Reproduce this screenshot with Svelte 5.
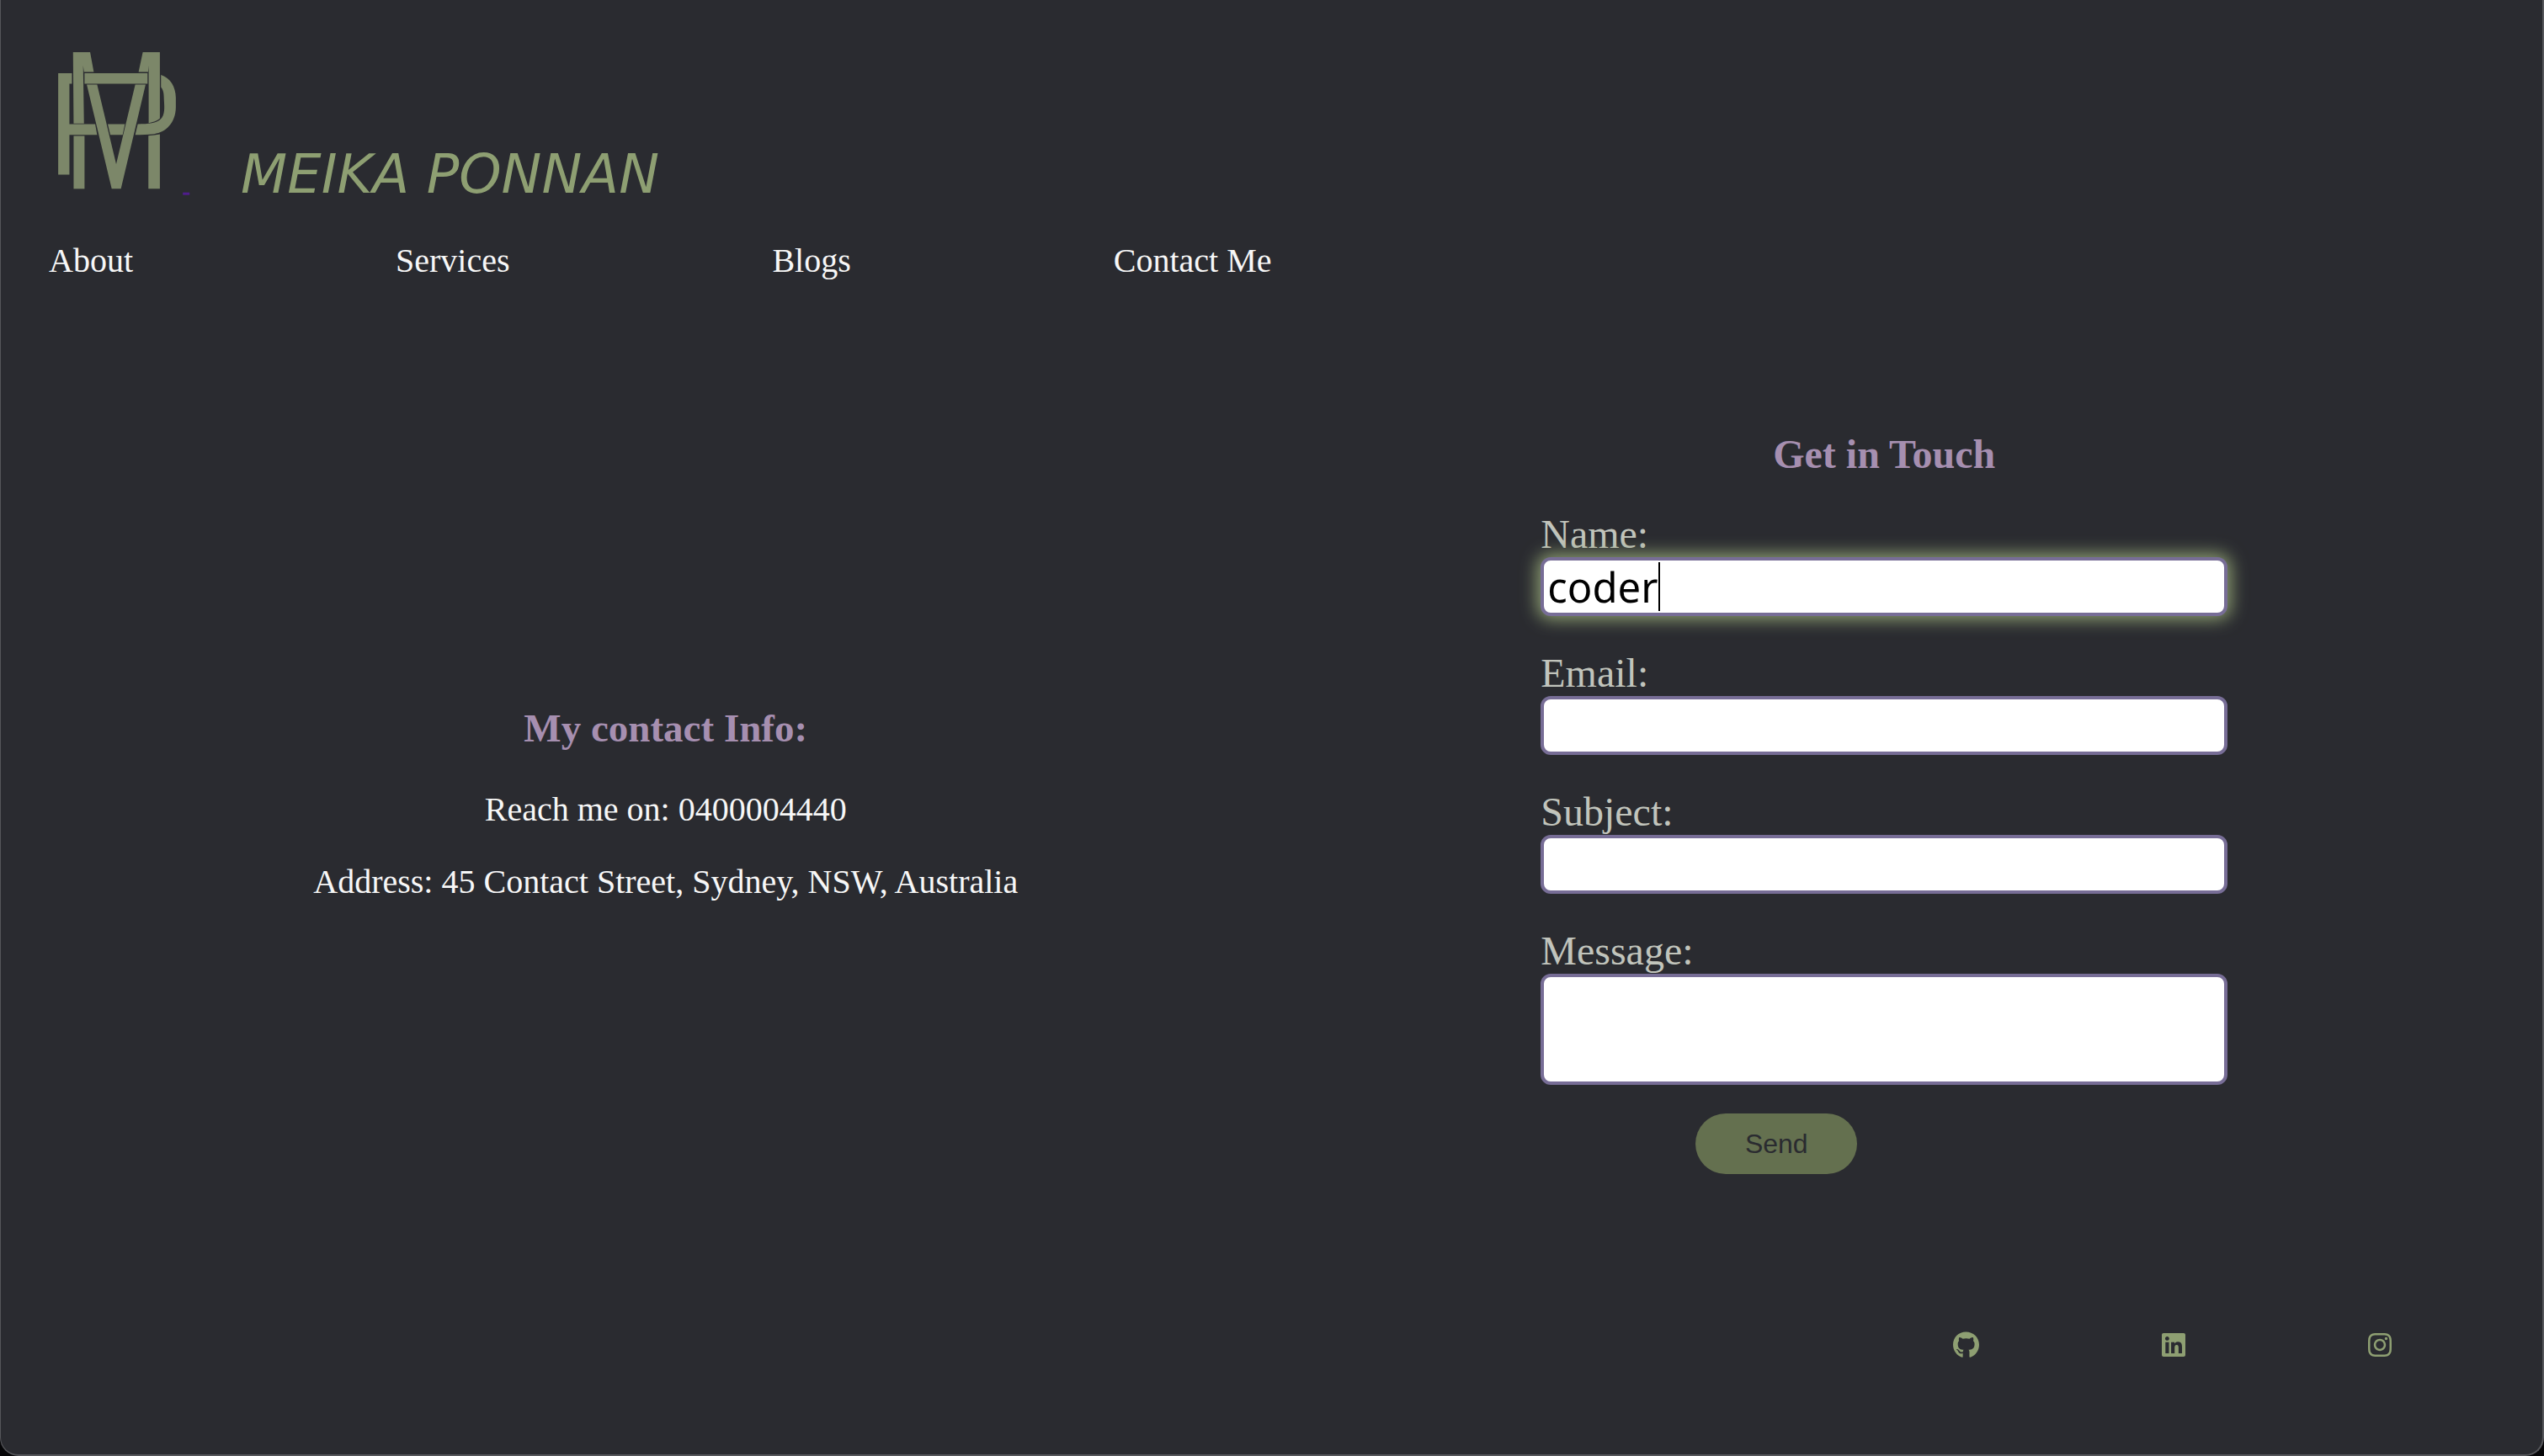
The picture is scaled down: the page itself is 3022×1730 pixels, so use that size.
<script>
  const links = ['About', 'Services', 'Blogs', 'Contact Me'];
  let name = $state('coder');
</script>

<div class="page">
  <header>
    <a class="brand" href="#home" aria-label="Meika Ponnan home">
      <svg class="logo" viewBox="0 0 480 520" aria-hidden="true">
        <g fill="#7c8769" transform="translate(-80 -60)">
          <path d="M142 66H203L216 137H181L178 114L181 321H144Z" />
          <path d="M391 66H452V303Q436 316 412 319V114L410 137H376Z" />
          <path d="M89 141H138V179H129V323H221L228 361H129V503H89Z" />
          <path d="M183 141H408V179H183Z" />
          <path d="M191 182H228L296 466L364 182H401L313 554H280Z" />
          <path d="M266 323H327L319 361H275Z" />
          <path d="M373 323C413 323 440 320 454 306C471 291 468 262 467 242C466 219 467 205 456 191V147C490 158 508 190 509 228V264C508 319 473 353 432 358C410 361 386 361 364 361Z" />
          <path d="M144 365H183V554H144Z" />
          <path d="M411 364Q433 363 452 359V554H411Z" />
        </g>
        <rect x="454" y="507" width="24" height="9" fill="#4f1d8c" />
      </svg>
      <span class="name">MEIKA PONNAN</span>
    </a>
    <nav>
      {#each links as link}
        <a href="#{link.toLowerCase().replace(' ', '-')}">{link}</a>
      {/each}
    </nav>
  </header>

  <main>
    <section class="info">
      <h3>My contact Info:</h3>
      <p>Reach me on: 0400004440</p>
      <p>Address: 45 Contact Street, Sydney, NSW, Australia</p>
    </section>

    <section class="touch">
      <h2>Get in Touch</h2>
      <form onsubmit={(e) => e.preventDefault()}>
        <label for="name">Name:</label>
        <div class="field">
          <input id="name" class="active" type="text" bind:value={name} />
          <span class="caret"></span>
        </div>
        <label for="email">Email:</label>
        <div class="field"><input id="email" type="email" /></div>
        <label for="subject">Subject:</label>
        <div class="field"><input id="subject" type="text" /></div>
        <label for="message">Message:</label>
        <textarea id="message"></textarea>
        <button type="submit">Send</button>
      </form>
    </section>
  </main>

  <footer>
    <div class="social">
      <a href="#github" aria-label="GitHub">
        <svg viewBox="0 0 496 512"><path d="M165.9 397.4c0 2-2.3 3.6-5.2 3.6-3.3.3-5.6-1.3-5.6-3.6 0-2 2.3-3.6 5.2-3.6 3-.3 5.6 1.3 5.6 3.6zm-31.1-4.5c-.7 2 1.3 4.3 4.3 4.9 2.6 1 5.6 0 6.2-2s-1.3-4.3-4.3-5.2c-2.6-.7-5.5.3-6.2 2.3zm44.2-1.7c-2.9.7-4.9 2.6-4.6 4.9.3 2 2.9 3.3 5.9 2.6 2.9-.7 4.9-2.6 4.6-4.6-.3-1.9-3-3.2-5.9-2.9zM244.8 8C106.1 8 0 113.3 0 252c0 110.9 69.8 205.8 169.5 239.2 12.8 2.3 17.3-5.6 17.3-12.1 0-6.2-.3-40.4-.3-61.4 0 0-70 15-84.7-29.8 0 0-11.4-29.1-27.8-36.6 0 0-22.9-15.7 1.6-15.4 0 0 24.9 2 38.6 25.8 21.9 38.6 58.6 27.5 72.9 20.9 2.3-16 8.8-27.1 16-33.7-55.9-6.2-112.3-14.3-112.3-110.5 0-27.5 7.6-41.3 23.6-58.9-2.6-6.5-11.1-33.3 2.6-67.9 20.9-6.5 69 27 69 27 20-5.6 41.5-8.5 62.8-8.5s42.8 2.9 62.8 8.5c0 0 48.1-33.6 69-27 13.7 34.7 5.2 61.4 2.6 67.9 16 17.7 25.8 31.5 25.8 58.9 0 96.5-58.9 104.2-114.8 110.5 9.2 7.9 17 22.9 17 46.4 0 33.7-.3 75.4-.3 83.6 0 6.5 4.6 14.4 17.3 12.1C428.2 457.8 496 362.9 496 252 496 113.3 383.5 8 244.8 8z" /></svg>
      </a>
      <a href="#linkedin" aria-label="LinkedIn">
        <svg viewBox="0 0 448 512"><path d="M416 32H31.9C14.3 32 0 46.5 0 64.3v383.4C0 465.5 14.3 480 31.9 480H416c17.6 0 32-14.5 32-32.3V64.3c0-17.8-14.4-32.3-32-32.3zM135.4 416H69V202.2h66.5V416zm-33.2-243c-21.3 0-38.5-17.3-38.5-38.5S80.9 96 102.2 96c21.2 0 38.5 17.3 38.5 38.5 0 21.3-17.2 38.5-38.5 38.5zm282.1 243h-66.4V312c0-24.8-.5-56.7-34.5-56.7-34.6 0-39.9 27-39.9 54.9V416h-66.4V202.2h63.7v29.2h.9c8.9-16.8 30.6-34.5 62.9-34.5 67.2 0 79.7 44.3 79.7 101.9V416z" /></svg>
      </a>
      <a href="#instagram" aria-label="Instagram">
        <svg viewBox="0 0 448 512"><path d="M224.1 141c-63.6 0-114.9 51.3-114.9 114.9s51.3 114.9 114.9 114.9S339 319.5 339 255.9 287.7 141 224.1 141zm0 189.6c-41.1 0-74.7-33.5-74.7-74.7s33.5-74.7 74.7-74.7 74.7 33.5 74.7 74.7-33.6 74.7-74.7 74.7zm146.4-194.3c0 14.9-12 26.8-26.8 26.8-14.9 0-26.8-12-26.8-26.8s12-26.8 26.8-26.8 26.8 12 26.8 26.8zm76.1 27.2c-1.7-35.9-9.9-67.7-36.2-93.9-26.2-26.2-58-34.4-93.9-36.2-37-2.1-147.9-2.1-184.9 0-35.8 1.7-67.6 9.9-93.9 36.1s-34.4 58-36.2 93.9c-2.1 37-2.1 147.9 0 184.9 1.7 35.9 9.9 67.7 36.2 93.9s58 34.4 93.9 36.2c37 2.1 147.9 2.1 184.9 0 35.9-1.7 67.7-9.9 93.9-36.2 26.2-26.2 34.4-58 36.2-93.9 2.1-37 2.1-147.8 0-184.8zM398.8 388c-7.8 19.6-22.9 34.7-42.6 42.6-29.5 11.7-99.5 9-132.1 9s-102.7 2.6-132.1-9c-19.6-7.8-34.7-22.9-42.6-42.6-11.7-29.5-9-99.5-9-132.1s-2.6-102.7 9-132.1c7.8-19.6 22.9-34.7 42.6-42.6 29.5-11.7 99.5-9 132.1-9s102.7-2.6 132.1 9c19.6 7.8 34.7 22.9 42.6 42.6 11.7 29.5 9 99.5 9 132.1s2.7 102.7-9 132.1z" /></svg>
      </a>
    </div>
  </footer>
</div>

<style>
  :global(body) {
    background: #060608;
  }

  .page {
    box-sizing: border-box;
    min-height: 100vh;
    display: flex;
    flex-direction: column;
    background: #2a2b30;
    border: 2px solid #55565a;
    border-top: 0;
    border-left-width: 1px;
    border-radius: 0 0 22px 22px;
    font-family: 'Liberation Serif', serif;
    font-size: 40px;
    line-height: 46px;
    color: #f7f7f7;
  }

  a {
    color: inherit;
    text-decoration: none;
  }

  header {
    padding: 60px 57px 0;
  }

  .brand {
    display: flex;
    align-items: flex-end;
    gap: 60px;
    padding-left: 8px;
  }

  .logo {
    width: 160px;
    height: 173px;
  }

  .name {
    font-family: 'DejaVu Sans', sans-serif;
    font-style: italic;
    font-size: 64px;
    line-height: 52px;
    color: #8e9f72;
  }

  nav {
    display: flex;
    justify-content: space-between;
    width: 50%;
    margin-top: 54px;
  }

  main {
    display: grid;
    grid-template-columns: 1fr 1fr;
    align-items: center;
    padding: 0 58px 0 66px;
    margin-top: 179px;
  }

  .info {
    padding-bottom: 6px;
    text-align: center;
  }

  h2,
  h3 {
    margin: 0 0 40px;
    font-size: 48px;
    line-height: 55px;
    text-align: center;
    color: #a68fb0;
  }

  h3 {
    margin: 47px 0;
    font-size: 47px;
    line-height: 54px;
  }

  p {
    margin: 0 0 40px;
  }

  .touch {
    width: 816px;
    max-width: 100%;
    justify-self: center;
  }

  form {
    display: flex;
    flex-direction: column;
  }

  label {
    font-size: 48px;
    line-height: 55px;
    color: #c1c4bc;
  }

  .field {
    position: relative;
    display: flex;
    margin-bottom: 40px;
  }

  input,
  textarea {
    box-sizing: border-box;
    width: 100%;
    height: 70px;
    margin: 0;
    padding: 2px 4px;
    border: 4px solid #776d96;
    border-radius: 12px;
    background: #fff;
    color: #000;
    font-family: 'Noto Sans', sans-serif;
    font-size: 49px;
    outline: none;
    resize: none;
  }

  textarea {
    height: 132px;
  }

  .active {
    box-shadow: 0 0 20px 4px #8e9f72;
  }

  .caret {
    position: absolute;
    left: 140px;
    top: 6px;
    width: 2px;
    height: 58px;
    background: #000;
  }

  button {
    align-self: flex-start;
    margin: 34px 0 0 184px;
    width: 192px;
    height: 72px;
    padding: 0;
    border: 0;
    border-radius: 36px;
    background: #64704f;
    color: #2a2b30;
    font-family: 'Liberation Sans', sans-serif;
    font-size: 32px;
  }

  footer {
    display: flex;
    justify-content: flex-end;
    margin-top: auto;
    padding: 0 71px 114px 0;
  }

  .social {
    display: flex;
    justify-content: space-around;
    width: 25%;
  }

  .social a {
    display: flex;
  }

  .social svg {
    height: 32px;
    fill: #8e9f72;
  }
</style>
